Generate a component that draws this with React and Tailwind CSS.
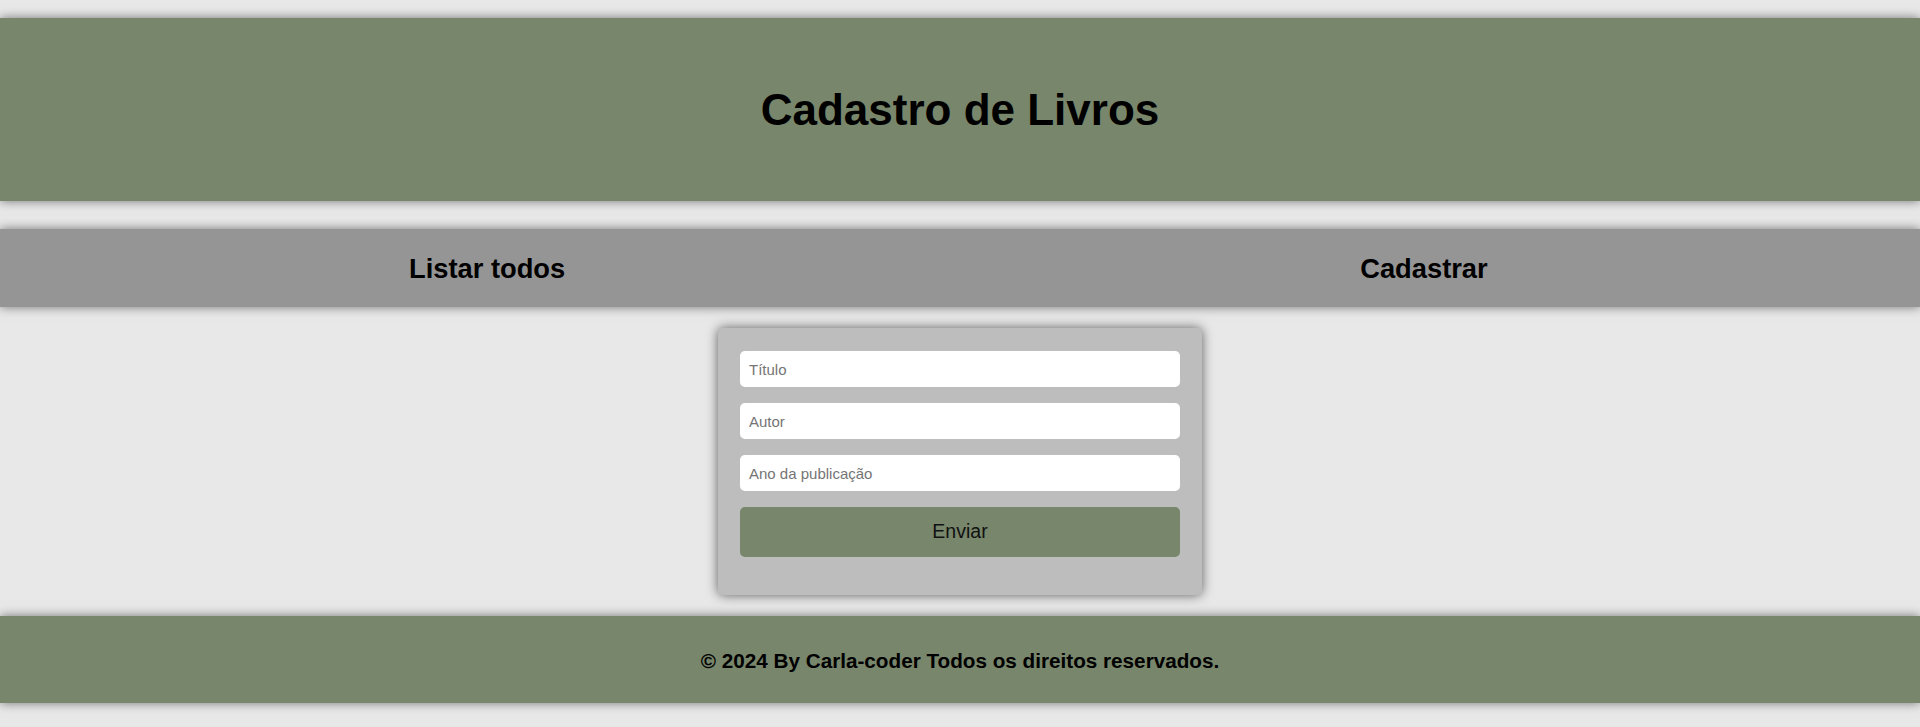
export default function App() {
  return (
    <div className="min-h-[727px] bg-[#e8e8e8] pt-[18px] pb-[22px] font-['Liberation_Sans',Arial,sans-serif] text-black">
      <header className="h-[183px] bg-[#78866b] shadow-[0_0_10px_rgba(0,0,0,0.5)] flex items-center justify-center">
        <h1 className="text-[44px] font-bold leading-none pt-[1px]">Cadastro de Livros</h1>
      </header>
      <nav className="mt-[28px] h-[78px] bg-[#959595] shadow-[0_0_10px_rgba(0,0,0,0.5)] flex items-center pt-[2px]">
        <a className="ml-[409px] text-[27.3px] font-bold leading-none">Listar todos</a>
        <a className="ml-[795px] text-[27.3px] font-bold leading-none">Cadastrar</a>
      </nav>
      <main className="flex justify-center mt-[21px]">
        <form
          className="w-[484px] h-[267px] bg-[#bdbdbd] rounded-[5px] shadow-[0_0_12px_rgba(0,0,0,0.6)] pt-[23px] px-[22px] flex flex-col gap-[16px]"
          onSubmit={(e) => e.preventDefault()}
        >
          <input
            placeholder="Título"
            className="h-[36px] w-full bg-white rounded-[5px] px-[9px] text-[15px] outline-none placeholder:text-[#757575]"
          />
          <input
            placeholder="Autor"
            className="h-[36px] w-full bg-white rounded-[5px] px-[9px] text-[15px] outline-none placeholder:text-[#757575]"
          />
          <input
            placeholder="Ano da publicação"
            className="h-[36px] w-full bg-white rounded-[5px] px-[9px] text-[15px] outline-none placeholder:text-[#757575]"
          />
          <button
            type="submit"
            className="h-[50px] w-full bg-[#78866b] rounded-[5px] text-[19.5px] text-[#111]"
          >
            Enviar
          </button>
        </form>
      </main>
      <footer className="mt-[21px] h-[87px] bg-[#78866b] shadow-[0_0_10px_rgba(0,0,0,0.5)] flex items-center justify-center pt-[3px]">
        <p className="text-[20.7px] font-bold leading-none">© 2024 By Carla-coder Todos os direitos reservados.</p>
      </footer>
    </div>
  );
}
